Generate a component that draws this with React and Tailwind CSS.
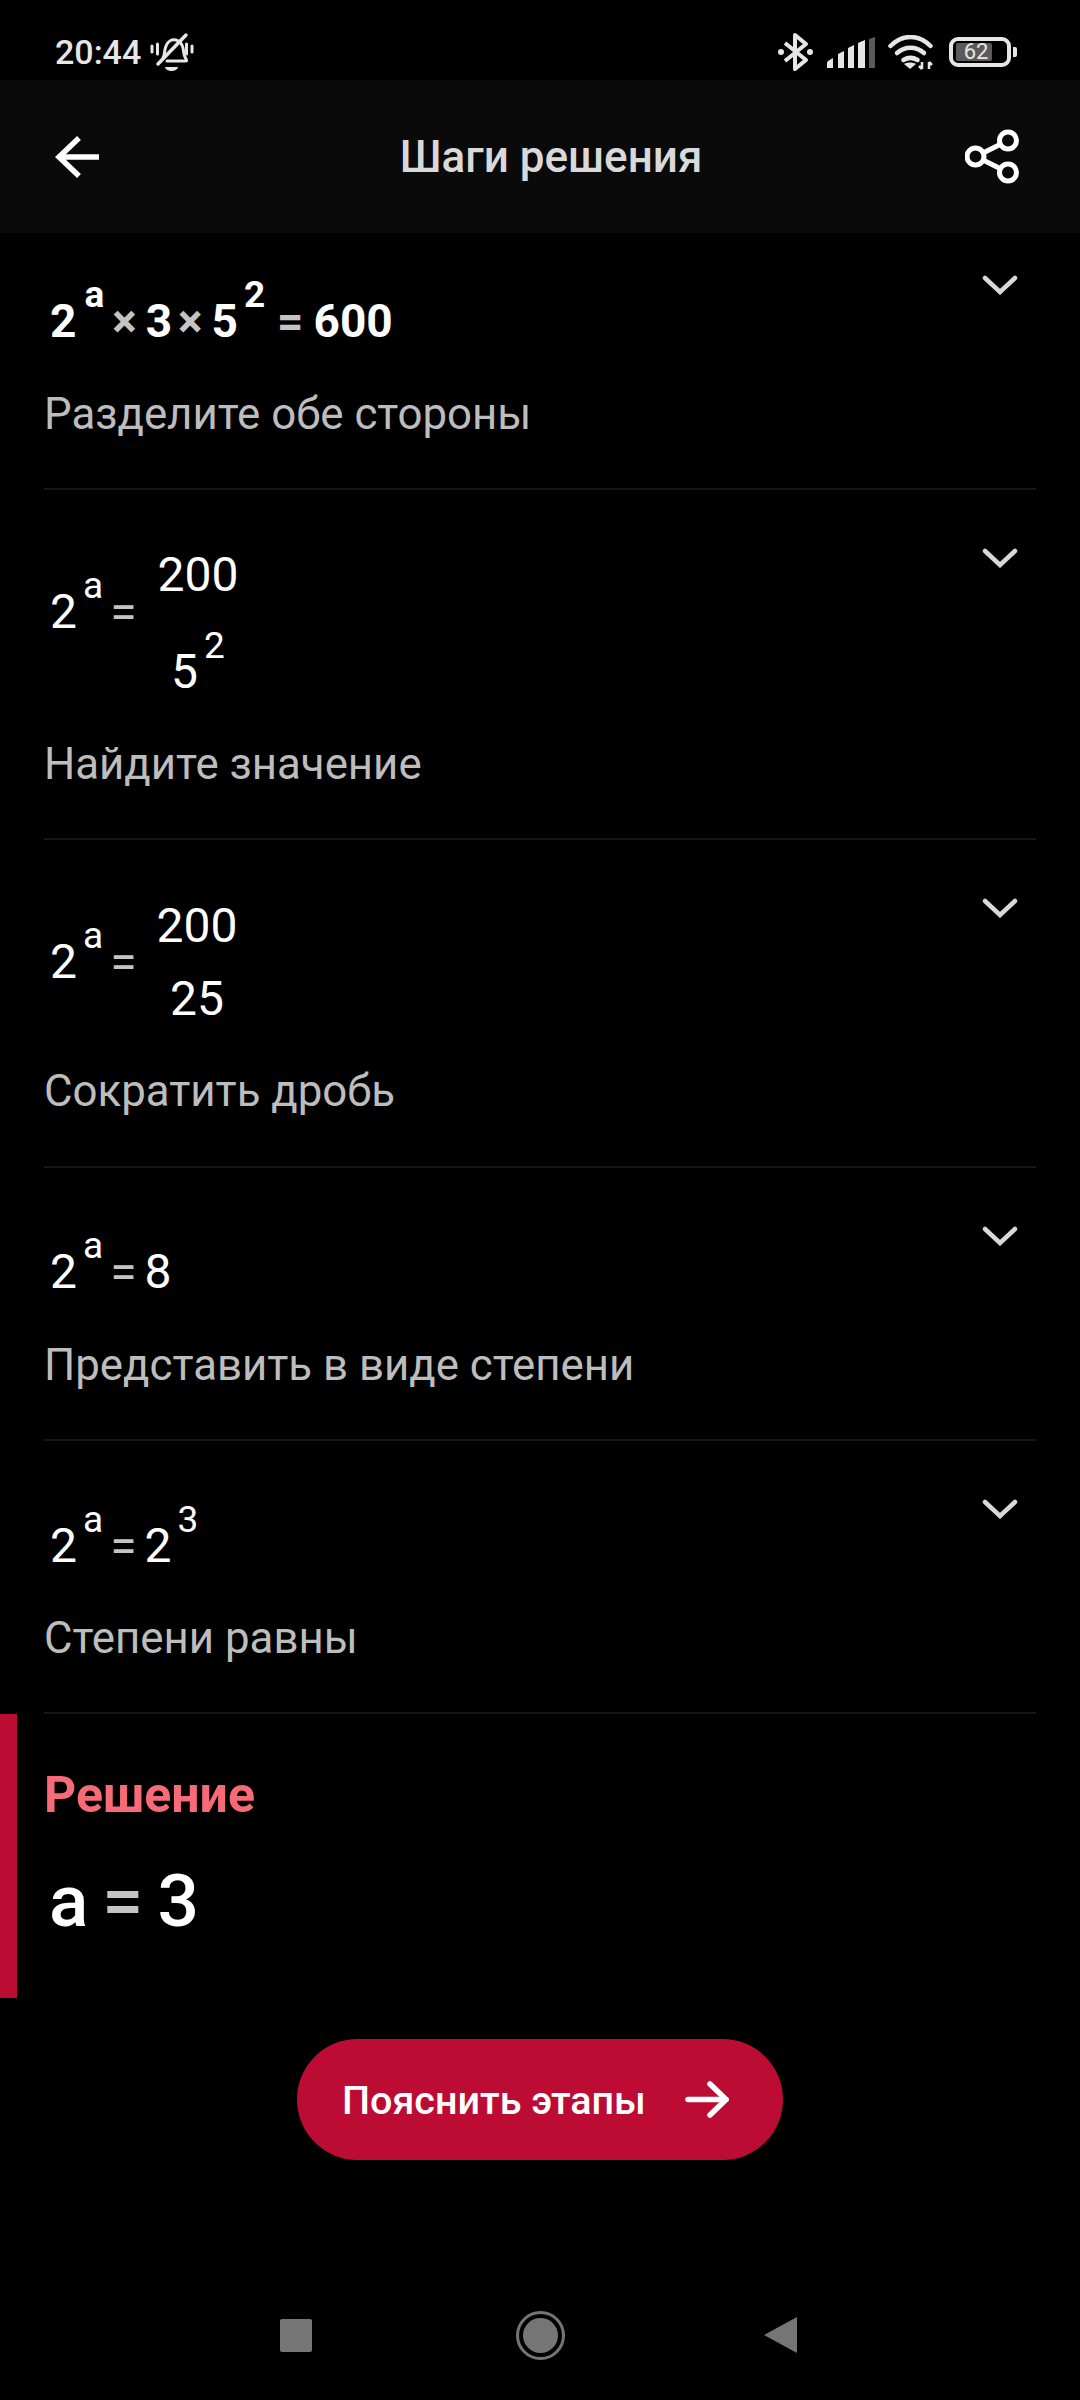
function Sup({ children, className = "ml-[6px] mr-[7px]" }) {
  return <span className={`inline-block text-[37px] leading-none align-[30px] ${className}`}>{children}</span>
}

function Op({ children, className = "mr-[8px]" }) {
  return <span className={`text-[#c4c4c4] ${className}`}>{children}</span>
}

function Chevron({ className }) {
  return (
    <svg viewBox="0 0 36 20" className={`w-[36px] h-[20px] ${className}`} fill="none" stroke="#d8d8d8" strokeWidth="4.500" strokeLinecap="round" strokeLinejoin="miter">
      <path d="M3 3 L18 17 L33 3" />
    </svg>
  )
}

function Step({ caption, height, chevronTop, children, last }) {
  return (
    <div className={`mx-[44px] relative flex flex-col border-[#161616] ${last ? "" : "border-b-2"} ${height}`}>
      <Chevron className={`absolute right-[18px] ${chevronTop}`} />
      {children}
      <p className="text-[43.8px] leading-[50px] text-[#bdbdbd]">{caption}</p>
    </div>
  )
}

function Expr({ children, className }) {
  return <div className={`pl-[6px] leading-[130px] text-white whitespace-nowrap ${className}`}>{children}</div>
}

function Fraction({ top, bottom, rowClass, className }) {
  return (
    <span className={`inline-flex flex-col items-center ${rowClass} ${className}`}>
      <span>{top}</span>
      <span>{bottom}</span>
    </span>
  )
}

export default function App() {
  return (
    <div className="w-[1080px] h-[2400px] bg-black flex flex-col font-['Roboto',sans-serif] overflow-hidden">
      {/* Status bar */}
      <div className="h-[80px] pt-[24px] flex items-center justify-between pl-[55px] pr-[63px] text-[#e6e6e6]">
        <div className="flex items-center gap-[9px]">
          <span className="text-[34px] font-medium">20:44</span>
          <svg viewBox="0 0 44 40" className="w-[44px] h-[40px]" fill="none" stroke="#e6e6e6" strokeWidth="3" strokeLinecap="round">
            <path d="M2 14v6M7.500 12v10M36.500 12v10M42 14v6" />
            <path d="M13 26c2-3 1-7 3-12 2-5 6-7 10-6 4 1 6 4 7 8 1 4 0 7 3 11 1 2 1 2-1 2H17" />
            <path d="M8 32 36 3" strokeWidth="3.500" />
            <path d="M15 35h13a6.500 4 0 0 1-13 0Z" fill="#e6e6e6" stroke="none" />
          </svg>
        </div>
        <div className="flex items-center">
          <svg viewBox="0 0 35 40" className="w-[35px] h-[40px] mr-[14px]" fill="none" stroke="#e6e6e6" strokeWidth="4" strokeLinejoin="round">
            <path d="M7 11 28 28 17 37V3l11 9L7 29" />
            <circle cx="3" cy="20" r="3" fill="#e6e6e6" stroke="none" />
            <circle cx="32" cy="20" r="3" fill="#e6e6e6" stroke="none" />
          </svg>
          <svg viewBox="0 0 48 31" className="w-[48px] h-[31px] mr-[13px]" fill="#e6e6e6">
            <path d="M0 31v-5q0-1 1-2l5-3v10Z M11 31V17l6-3v17Z M21 31V11l6-3v23Z M31 31V6l7-3v28Z" />
            <path d="M42 31V2l6-2v31Z" fill="#5a5a5a" />
          </svg>
          <svg viewBox="0 0 45 35" className="w-[45px] h-[35px] mr-[16px]" fill="none" stroke="#e6e6e6" strokeWidth="4.500" strokeLinecap="round">
            <path d="M2.500 11c12-12 28-12 40 0" />
            <path d="M9 18c8-7 19-7 27 0" />
            <path d="M15.500 25c5-3 9-3 14 0" />
            <path d="M22 34l-6-5c3-2 9-2 12 0Z" fill="#e6e6e6" stroke="none" />
            <path d="M34 27v7M31 31l3 3M41 34v-7M41 27l3 3" strokeWidth="2.500" strokeLinecap="butt" />
          </svg>
          <div className="flex items-center">
            <div className="w-[62px] h-[30px] rounded-[9px] border-[4px] border-[#e6e6e6] relative flex items-center">
              <div className="absolute left-[3px] top-[2px] bottom-[2px] w-[36px] bg-[#5a5a5a] rounded-[2px]" />
              <span className="relative w-full pr-[8px] text-center text-[22px] leading-none text-[#e6e6e6]">62</span>
            </div>
            <div className="w-[4px] h-[10px] ml-[2px] bg-[#e6e6e6] rounded-r-[2px]" />
          </div>
        </div>
      </div>

      {/* Header */}
      <div className="h-[153px] bg-[#0a0a0a] flex items-center justify-between pl-[55px] pr-[61px]">
        <svg viewBox="0 0 44 44" className="w-[44px] h-[44px]" fill="none" stroke="white" strokeWidth="5.500">
          <path d="M44 22H4" />
          <path d="M24 3 4 22l20 19" />
        </svg>
        <h1 className="ml-[38px] text-[44px] font-medium text-[#d9d9d9]">Шаги решения</h1>
        <svg viewBox="0 0 54 55" className="w-[54px] h-[55px]" fill="none" stroke="white" strokeWidth="5">
          <circle cx="43" cy="11.500" r="8.500" />
          <circle cx="43" cy="43.500" r="8.500" />
          <circle cx="10.500" cy="27.500" r="8.500" />
          <path d="M18 24 36 15M18 31l18 9" />
        </svg>
      </div>

      {/* Steps */}
      <Step caption="Разделите обе стороны" height="h-[257px]" chevronTop="top-[42px]">
        <Expr className="h-[156px] pt-[23px] text-[46px] font-bold">
          2<Sup className="ml-[8px] mr-[8px]">a</Sup><Op className="mr-[9px]">×</Op><span className="mr-[6px]">3</span><Op className="mr-[9px]">×</Op>5<Sup className="ml-[6px] mr-[12px]">2</Sup><Op className="mr-[10px]">=</Op>600
        </Expr>
      </Step>
      <Step caption="Найдите значение" height="h-[350px]" chevronTop="top-[58px]">
        <Expr className="h-[249px] pt-[36px] text-[48px]">
          2<Sup>a</Sup><Op className="mr-0">=</Op>
          <Fraction
            className="ml-[21px] align-[37px]"
            rowClass="leading-[97px]"
            top="200"
            bottom={<>5<Sup className="ml-[6px] mr-0">2</Sup></>}
          />
        </Expr>
      </Step>
      <Step caption="Сократить дробь" height="h-[328px]" chevronTop="top-[58px]">
        <Expr className="h-[226px] pt-[49px] text-[48px]">
          2<Sup>a</Sup><Op className="mr-0">=</Op>
          <Fraction className="ml-[20px] align-[36px]" rowClass="leading-[73px]" top="200" bottom="25" />
        </Expr>
      </Step>
      <Step caption="Представить в виде степени" height="h-[273px]" chevronTop="top-[58px]">
        <Expr className="h-[172px] pt-[39px] text-[48px]">
          2<Sup>a</Sup><Op>=</Op>8
        </Expr>
      </Step>
      <Step caption="Степени равны" height="h-[273px]" chevronTop="top-[58px]">
        <Expr className="h-[172px] pt-[40px] text-[48px]">
          2<Sup>a</Sup><Op>=</Op>2<Sup>3</Sup>
        </Expr>
      </Step>

      {/* Solution */}
      <div className="h-[284px] border-l-[17px] border-[#bd0c34] pl-[27px] pt-[53px]">
        <p className="text-[50px] leading-[56px] font-bold text-[#f76a78]">Решение</p>
        <p className="pl-[5px] mt-[36px] text-[73px] leading-[84px] font-medium text-white">
          a<span className="mx-[14px] text-[#c4c4c4]">=</span>3
        </p>
      </div>

      {/* Action */}
      <div className="flex justify-center mt-[41px]">
        <button className="w-[486px] h-[121px] rounded-full bg-[#bd0c34] flex items-center justify-between pl-[45px] pr-[54px] text-[39.5px] font-medium text-white">
          <span className="mt-[3px]">Пояснить этапы</span>
          <svg viewBox="0 0 44 37" className="w-[44px] h-[37px]" fill="none" stroke="white" strokeWidth="5.500" strokeLinecap="round" strokeLinejoin="round">
            <path d="M3 18.500H41" />
            <path d="M25 3 41 18.500 25 34" />
          </svg>
        </button>
      </div>

      {/* Nav bar */}
      <div className="mt-auto h-[130px] flex items-center pl-[280px]">
        <div className="w-[32px] h-[33px] rounded-[2px] bg-[#757575]" />
        <div className="ml-[204px] w-[49px] h-[49px] rounded-full border-[3px] border-[#757575] flex items-center justify-center">
          <div className="w-[35px] h-[35px] rounded-full bg-[#757575]" />
        </div>
        <svg viewBox="0 0 33 36" className="ml-[199px] w-[33px] h-[36px]" fill="#757575">
          <path d="M0 18 33 0v36Z" />
        </svg>
      </div>
    </div>
  )
}
